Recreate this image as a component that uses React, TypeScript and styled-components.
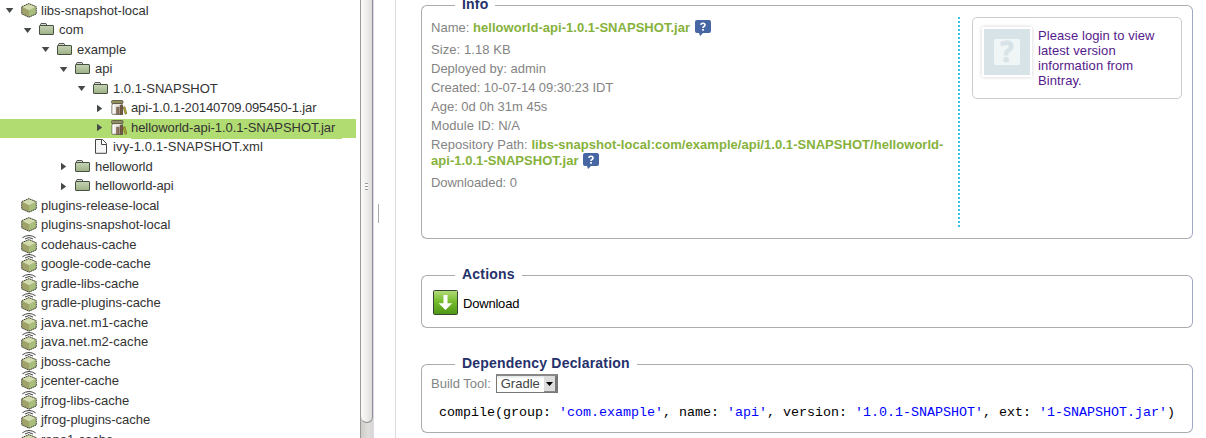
import React from "react";
import styled, { createGlobalStyle } from "styled-components";

const GlobalStyle = createGlobalStyle`
  * { box-sizing: border-box; }
  html, body { margin: 0; height: 438px; overflow: hidden; background: #fff; }
  body { font: 13px/15px "Liberation Sans", Arial, sans-serif; color: #333; }
`;

const Page = styled.div`
  display: flex;
  width: 1206px;
  height: 438px;
  overflow: hidden;
`;

const Tree = styled.ul`
  list-style: none;
  margin: 0;
  padding: 0.4px 4px 0 0;
  width: 360px;
  flex: none;
  height: 438px;
  overflow: hidden;
`;

const TreeRow = styled.li<{ $depth: number; $selected?: boolean }>`
  display: flex;
  align-items: center;
  height: ${(p) => (p.$selected ? 19 : 19.5)}px;
  margin: ${(p) => (p.$selected ? "1.6px 0 -1.1px" : "0")};
  padding: 0 0 ${(p) => (p.$selected ? 2 : 0)}px ${(p) => 4 + p.$depth * 18}px;
  background: ${(p) => (p.$selected ? "#b1dc71" : "none")};
`;

const Toggle = styled.span`
  display: flex;
  flex: none;
  width: 17px;
  height: 12px;
  padding-top: 1px;
  align-items: center;
`;

const IconSlot = styled.span`
  display: flex;
  flex: none;
  width: 20px;
`;

const NodeLabel = styled.span<{ $selected?: boolean; $tracking?: number }>`
  white-space: nowrap;
  line-height: 19px;
  padding-right: 7px;
  letter-spacing: ${(p) => p.$tracking ?? 0}px;
  box-shadow: ${(p) => (p.$selected ? "0 2px 0 #b1dc71" : "none")};
`;

const ScrollTrack = styled.div`
  width: 14px;
  flex: none;
  height: 438px;
  background: linear-gradient(90deg, #cfcdca, #e0dedb 60%, #d8d6d4);
  border-left: 1px solid #999;
  border-right: 1px solid #dcdae6;
`;

const ScrollThumb = styled.div`
  height: 423px;
  display: flex;
  align-items: center;
  justify-content: center;
  background: linear-gradient(90deg, #fbfbfa, #efeeec 50%, #dfdddb);
  border-right: 1px solid #8f8f94;
  border-bottom: 1px solid #8f8f8f;
  border-radius: 0 0 7px 7px;
`;

const Grip = styled.span`
  width: 3px;
  height: 7px;
  margin-top: -49px;
  background: repeating-linear-gradient(#999 0 1px, #fafafa 1px 3px);
`;

const Gutter = styled.div`
  width: 22px;
  flex: none;
  border-right: 1px solid #dcdcdc;
  padding: 204px 0 0 4px;
`;

const SplitHandle = styled.div`
  width: 1px;
  height: 19px;
  background: #aaa;
`;

const Content = styled.main`
  flex: none;
  width: 797px;
  padding-left: 25px;
`;

const Group = styled.fieldset<{ $height: number; $gap: number }>`
  width: 772px;
  height: ${(p) => p.$height}px;
  margin: ${(p) => p.$gap}px 0 0;
  padding: 0 0 0 9px;
  min-width: 0;
  border: 1px solid #acacac;
  border-right-color: #9fa9c4;
  border-radius: 6px;
`;

const GroupTitle = styled.legend`
  margin-left: 24px;
  padding: 0 7px;
  height: 17px;
  line-height: 15px;
  font-size: 14px;
  font-weight: bold;
  letter-spacing: 0.2px;
  color: #25316b;
`;

const InfoLayout = styled.div`
  display: flex;
  padding-top: 3px;
`;

const Details = styled.div`
  width: 527px;
  padding-top: 3px;
  color: #848484;
`;

const Detail = styled.div<{ $height?: number; $tracking?: number }>`
  height: ${(p) => p.$height ?? 15}px;
  line-height: ${(p) => (p.$height === 34 ? 16 : 15)}px;
  margin-bottom: 4px;
  letter-spacing: ${(p) => p.$tracking ?? 0}px;
  white-space: nowrap;

  b {
    color: #86b23b;
  }
  svg {
    margin: -2px 0 -2px 1px;
    vertical-align: -2px;
  }
`;

const DottedRule = styled.div`
  width: 2px;
  height: 210px;
  background: repeating-linear-gradient(#37c0e8 0 2px, #fff 2px 4px);
`;

const LoginCard = styled.div`
  display: flex;
  width: 210px;
  height: 82px;
  margin-left: 12px;
  padding: 10px 0 0 9px;
  border: 1px solid #ccc;
  border-radius: 5px;
  color: #551a8b;

  p {
    width: 125px;
    margin: 0 0 0 6px;
    letter-spacing: 0.08px;
  }
`;

const Placeholder = styled.span`
  display: flex;
  align-items: center;
  justify-content: center;
  flex: none;
  width: 50px;
  height: 50px;
  margin-top: -1px;
  border: 2px solid #fff;
  background: #d8e3e8;
  box-shadow: 0 0 4px #d2d2d2;
`;

const PlaceholderMark = styled.span`
  width: 26px;
  height: 26px;
  border-radius: 2px;
  background: #f0f5f6;
  color: #d8e3e8;
  font: bold 28px/25px "Noto Sans", sans-serif;
  text-align: center;
  -webkit-text-stroke: 0.8px #d8e3e8;
`;

const ActionRow = styled.div`
  display: flex;
  align-items: center;
  gap: 5px;
  padding: 6px 0 0 2px;
  color: #000;
`;

const ActionLabel = styled.span`
  padding-top: 2px;
  letter-spacing: -0.2px;
`;

const BuildRow = styled.div`
  display: flex;
  align-items: center;
  gap: 5px;
  padding-top: 1px;
  color: #848484;
`;

const SelectBox = styled.div`
  display: flex;
  justify-content: space-between;
  width: 62px;
  height: 19px;
  border: 1px solid #777;
  border-top: 2px solid #888;
  padding-left: 4px;
  line-height: 16px;
  color: #444;
  background: linear-gradient(#e2e6e4, #fff 3px);
`;

const SelectButton = styled.span`
  display: flex;
  align-items: center;
  justify-content: center;
  width: 13px;
  background: #dcdcdc;
  border-right: 2px solid #777;
  border-bottom: 1px solid #888;
`;

const Code = styled.code`
  display: block;
  margin: 12px 0 0 8px;
  font: 13.333px/15px "Liberation Mono", "Courier New", monospace;
  white-space: pre;
  color: #000;

  span {
    color: #00f;
  }
`;

const CubeBody = () => (
  <g>
    <path d="M8 .8 1 3.7v7.2l7 3.2 7-3.2V3.7z" fill="#a0a269" />
    <path d="M8 7.2 15 3.7v7.2l-7 3.2z" fill="#a9bd7c" />
    <path d="M8 .8 1 3.7l7 3.5 7-3.5z" fill="#d2dbae" />
    <path d="M8 .6.7 3.7v7.2L8 14.2l7.3-3.3V3.7z" fill="none" stroke="#3e4234" strokeWidth="1" strokeDasharray="1.6 .5" />
  </g>
);

const RepoIcon = () => (
  <svg width="16" height="15" viewBox="0 0 16 15"><CubeBody /></svg>
);

const CacheIcon = () => (
  <svg width="16" height="19" viewBox="0 0 16 19">
    <g transform="translate(0 4)"><CubeBody /></g>
    <path d="M1.4 3Q8-1.8 14.6 3M4 4.2Q8 .8 12 4.2" fill="none" stroke="#fff" strokeWidth="2.4" />
    <path d="M1.4 2.8Q8-1.8 14.6 2.8M4 4Q8 1 12 4" fill="none" stroke="#444" strokeWidth="1" />
  </svg>
);

const FolderIcon = () => (
  <svg width="15" height="13" viewBox="0 0 15 13">
    <defs>
      <linearGradient id="folder" x1="0" y1="0" x2="0" y2="1">
        <stop offset="0" stopColor="#c6d3b5" />
        <stop offset="1" stopColor="#9db086" />
      </linearGradient>
    </defs>
    <path d="M1.5 3V1.2L2 .5h5l1 2" fill="#d8d8d3" stroke="#555b52" />
    <rect x=".5" y="2.5" width="14" height="9" rx=".5" fill="url(#folder)" stroke="#465041" />
  </svg>
);

const JarIcon = () => (
  <svg width="16" height="15" viewBox="0 0 16 15">
    <path d="M1.5 3.5h9.5v2l.5.5v8.3H1.5l-.6-.8V5.5z" fill="#e9e7e0" stroke="#6a655c" strokeWidth=".9" />
    <rect x=".5" y=".5" width="11.5" height="3" rx="1" fill="#8f8f62" stroke="#5d5b46" strokeWidth=".9" />
    <path d="M2.5 5v8.5" stroke="#fff" strokeWidth="1.6" />
    <path d="M5.5 7.2h2.6v7.3H5.5z" fill="#8d6f57" stroke="#5f5044" strokeWidth=".5" />
    <path d="M9 5.2h2.6v9.3H9z" fill="#7a5a44" stroke="#4b4037" strokeWidth=".5" />
    <path d="m12.2 7.3 1.7-.6 1.9 6.9-1.6.7z" fill="#bdb52b" stroke="#5a5520" strokeWidth=".6" />
  </svg>
);

const FileIcon = () => (
  <svg width="15" height="15" viewBox="-2 0 15 15">
    <path d="M.5.5h7l4 4v9.8H.5z" fill="#f6f6f6" stroke="#444" />
    <path d="M6.5.5v5h5" fill="#fff" stroke="#444" />
  </svg>
);

const ToggleArrow = ({ open }: { open: boolean }) => (
  <svg width="11" height="9" viewBox="0 0 11 9">
    <path d={open ? "M1.8 2h7.6L5.6 7z" : "M3 .7v7.6L8.2 4.5z"} fill="#454a49" />
  </svg>
);

const HelpIcon = () => (
  <svg width="16" height="16" viewBox="0 0 16 16">
    <path d="M2 0h12q2 0 2 2v9q0 2-2 2H8l-3 3-1-3H2q-2 0-2-2V2q0-2 2-2z" fill="#4766a4" />
    <path d="M5.8 4.9Q6 3.2 8 3.2t2 1.7Q10 6 8.6 6.7 8 7 8 8" fill="none" stroke="#fff" strokeWidth="1.6" />
    <rect x="7.1" y="9" width="1.8" height="1.7" fill="#fff" />
  </svg>
);

const DownloadIcon = () => (
  <svg width="25" height="25" viewBox="0 0 25 25">
    <defs>
      <linearGradient id="download" x1="0" y1="0" x2="0" y2="1">
        <stop offset="0" stopColor="#b4dc7d" />
        <stop offset=".45" stopColor="#77bd2d" />
        <stop offset="1" stopColor="#4f9517" />
      </linearGradient>
    </defs>
    <rect x=".5" y=".5" width="24" height="24" rx="1" fill="url(#download)" stroke="#374733" />
    <path d="M10.5 5h4v8.3h4.7l-6.7 6.7-6.9-6.7h4.9z" fill="#fff" />
  </svg>
);

type Kind = "repo" | "cache" | "folder" | "jar" | "file";
interface TreeNode {
  label: string;
  depth: number;
  kind: Kind;
  open?: boolean;
  selected?: boolean;
  tracking?: number;
}

const icons: Record<Kind, () => React.JSX.Element> = {
  repo: RepoIcon, cache: CacheIcon, folder: FolderIcon, jar: JarIcon, file: FileIcon,
};

const cache = (label: string, tracking = 0): TreeNode => ({ label, depth: 0, kind: "cache", tracking });

const nodes: TreeNode[] = [
  { label: "libs-snapshot-local", depth: 0, kind: "repo", open: true },
  { label: "com", depth: 1, kind: "folder", open: true },
  { label: "example", depth: 2, kind: "folder", open: true },
  { label: "api", depth: 3, kind: "folder", open: true },
  { label: "1.0.1-SNAPSHOT", depth: 4, kind: "folder", open: true },
  { label: "api-1.0.1-20140709.095450-1.jar", depth: 5, kind: "jar", open: false, tracking: -0.13 },
  { label: "helloworld-api-1.0.1-SNAPSHOT.jar", depth: 5, kind: "jar", open: false, selected: true, tracking: -0.05 },
  { label: "ivy-1.0.1-SNAPSHOT.xml", depth: 4, kind: "file", tracking: 0.12 },
  { label: "helloworld", depth: 3, kind: "folder", open: false, tracking: -0.1 },
  { label: "helloworld-api", depth: 3, kind: "folder", open: false, tracking: -0.13 },
  { label: "plugins-release-local", depth: 0, kind: "repo", tracking: -0.05 },
  { label: "plugins-snapshot-local", depth: 0, kind: "repo" },
  cache("codehaus-cache"),
  cache("google-code-cache", -0.06),
  cache("gradle-libs-cache", -0.06),
  cache("gradle-plugins-cache", -0.05),
  cache("java.net.m1-cache", 0.06),
  cache("java.net.m2-cache", 0.06),
  cache("jboss-cache"),
  cache("jcenter-cache"),
  cache("jfrog-libs-cache"),
  cache("jfrog-plugins-cache", -0.04),
  cache("repo1-cache"),
];

export default function App() {
  return (
    <Page>
      <GlobalStyle />
      <Tree>
        {nodes.map((n) => {
          const Icon = icons[n.kind];
          return (
            <TreeRow key={n.label} $depth={n.depth} $selected={n.selected}>
              <Toggle>{n.open !== undefined && <ToggleArrow open={n.open} />}</Toggle>
              <IconSlot><Icon /></IconSlot>
              <NodeLabel $selected={n.selected} $tracking={n.tracking}>{n.label}</NodeLabel>
            </TreeRow>
          );
        })}
      </Tree>
      <ScrollTrack>
        <ScrollThumb><Grip /></ScrollThumb>
      </ScrollTrack>
      <Gutter><SplitHandle /></Gutter>
      <Content>
        <Group $height={242} $gap={-3}>
          <GroupTitle>Info</GroupTitle>
          <InfoLayout>
            <Details>
              <Detail $height={18} $tracking={0.03}>Name: <b>helloworld-api-1.0.1-SNAPSHOT.jar</b> <HelpIcon /></Detail>
              <Detail $tracking={0.08}>Size: 1.18 KB</Detail>
              <Detail>Deployed by: admin</Detail>
              <Detail $tracking={-0.07}>Created: 10-07-14 09:30:23 IDT</Detail>
              <Detail>Age: 0d 0h 31m 45s</Detail>
              <Detail $tracking={0.06}>Module ID: N/A</Detail>
              <Detail $height={34} $tracking={0.04}>
                Repository Path: <b>libs-snapshot-local:com/example/api/1.0.1-SNAPSHOT/helloworld-<br />api-1.0.1-SNAPSHOT.jar</b> <HelpIcon />
              </Detail>
              <Detail $tracking={-0.07}>Downloaded: 0</Detail>
            </Details>
            <DottedRule />
            <LoginCard>
              <Placeholder><PlaceholderMark>?</PlaceholderMark></Placeholder>
              <p>Please login to view latest version information from Bintray.</p>
            </LoginCard>
          </InfoLayout>
        </Group>
        <Group $height={61} $gap={28}>
          <GroupTitle>Actions</GroupTitle>
          <ActionRow><DownloadIcon /><ActionLabel>Download</ActionLabel></ActionRow>
        </Group>
        <Group $height={77} $gap={28}>
          <GroupTitle>Dependency Declaration</GroupTitle>
          <BuildRow>
            Build Tool:
            <SelectBox>
              Gradle
              <SelectButton>
                <svg width="7" height="4" viewBox="0 0 7 4"><path d="M0 0h7L3.5 4z" fill="#000" /></svg>
              </SelectButton>
            </SelectBox>
          </BuildRow>
          <Code>
            compile(group: <span>'com.example'</span>, name: <span>'api'</span>, version: <span>'1.0.1-SNAPSHOT'</span>, ext: <span>'1-SNAPSHOT.jar'</span>)
          </Code>
        </Group>
      </Content>
    </Page>
  );
}
